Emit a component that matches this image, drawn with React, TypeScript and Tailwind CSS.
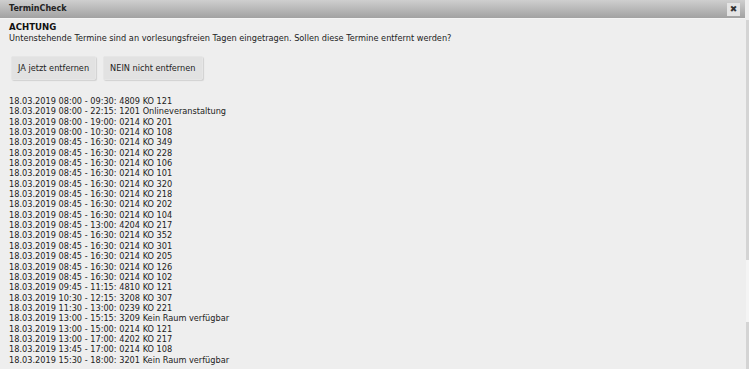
const TERMINE = [
  '18.03.2019 08:00 - 09:30: 4809 KO 121',
  '18.03.2019 08:00 - 22:15: 1201 Onlineveranstaltung',
  '18.03.2019 08:00 - 19:00: 0214 KO 201',
  '18.03.2019 08:00 - 10:30: 0214 KO 108',
  '18.03.2019 08:45 - 16:30: 0214 KO 349',
  '18.03.2019 08:45 - 16:30: 0214 KO 228',
  '18.03.2019 08:45 - 16:30: 0214 KO 106',
  '18.03.2019 08:45 - 16:30: 0214 KO 101',
  '18.03.2019 08:45 - 16:30: 0214 KO 320',
  '18.03.2019 08:45 - 16:30: 0214 KO 218',
  '18.03.2019 08:45 - 16:30: 0214 KO 202',
  '18.03.2019 08:45 - 16:30: 0214 KO 104',
  '18.03.2019 08:45 - 13:00: 4204 KO 217',
  '18.03.2019 08:45 - 16:30: 0214 KO 352',
  '18.03.2019 08:45 - 16:30: 0214 KO 301',
  '18.03.2019 08:45 - 16:30: 0214 KO 205',
  '18.03.2019 08:45 - 16:30: 0214 KO 126',
  '18.03.2019 08:45 - 16:30: 0214 KO 102',
  '18.03.2019 09:45 - 11:15: 4810 KO 121',
  '18.03.2019 10:30 - 12:15: 3208 KO 307',
  '18.03.2019 11:30 - 13:00: 0239 KO 221',
  '18.03.2019 13:00 - 15:15: 3209 Kein Raum verfügbar',
  '18.03.2019 13:00 - 15:00: 0214 KO 121',
  '18.03.2019 13:00 - 17:00: 4202 KO 217',
  '18.03.2019 13:45 - 17:00: 0214 KO 108',
  '18.03.2019 15:30 - 18:00: 3201 Kein Raum verfügbar',
];

function DialogButton({ label }: { label: string }) {
  return (
    <button className="h-[24px] px-[6px] rounded-[2px] bg-[#e2e2e2] text-[#222] border border-[#e6e6e6] shadow-[1px_1px_1px_rgba(0,0,0,0.12)]">
      {label}
    </button>
  );
}

export default function App() {
  return (
    <div className="relative w-[749px] h-[369px] overflow-hidden bg-[#eeeeee] text-[8.2px] text-[#222] font-['DejaVu_Sans',Verdana,sans-serif]">
      {/* Title bar */}
      <div className="flex items-center justify-between h-[19px] mr-[4px] pl-[9px] pr-[5px] bg-gradient-to-b from-[#cfcfcf] to-[#a2a2a2] border-b border-[#f4f4f4]">
        <span className="font-bold text-[8px] text-[#222]">TerminCheck</span>
        <span className="flex items-center justify-center w-[13px] h-[13px] bg-[#e4e4e4] text-[#333] text-[9px] leading-none">
          ✖
        </span>
      </div>

      {/* scroll strip */}
      <div className="absolute right-0 top-[20px] bottom-0 w-[3px] bg-[#d4d4d4]">
        <div className="absolute left-0 right-0 top-[240px] h-[62px] bg-[#f4f4f4]" />
      </div>

      <div className="pl-[9px] pt-[3px]">
        <div className="font-bold text-[8.6px] leading-[11px] text-[#111]">ACHTUNG</div>
        <div className="leading-[10px]">
          Untenstehende Termine sind an vorlesungsfreien Tagen eingetragen. Sollen diese Termine entfernt werden?
        </div>

        <div className="flex gap-[7px] mt-[13px] ml-[2px]">
          <DialogButton label="JA jetzt entfernen" />
          <DialogButton label="NEIN nicht entfernen" />
        </div>

        <div className="mt-[16px] leading-[10.35px]">
          {TERMINE.map((t, i) => (
            <div key={i}>{t}</div>
          ))}
        </div>
      </div>
    </div>
  );
}
